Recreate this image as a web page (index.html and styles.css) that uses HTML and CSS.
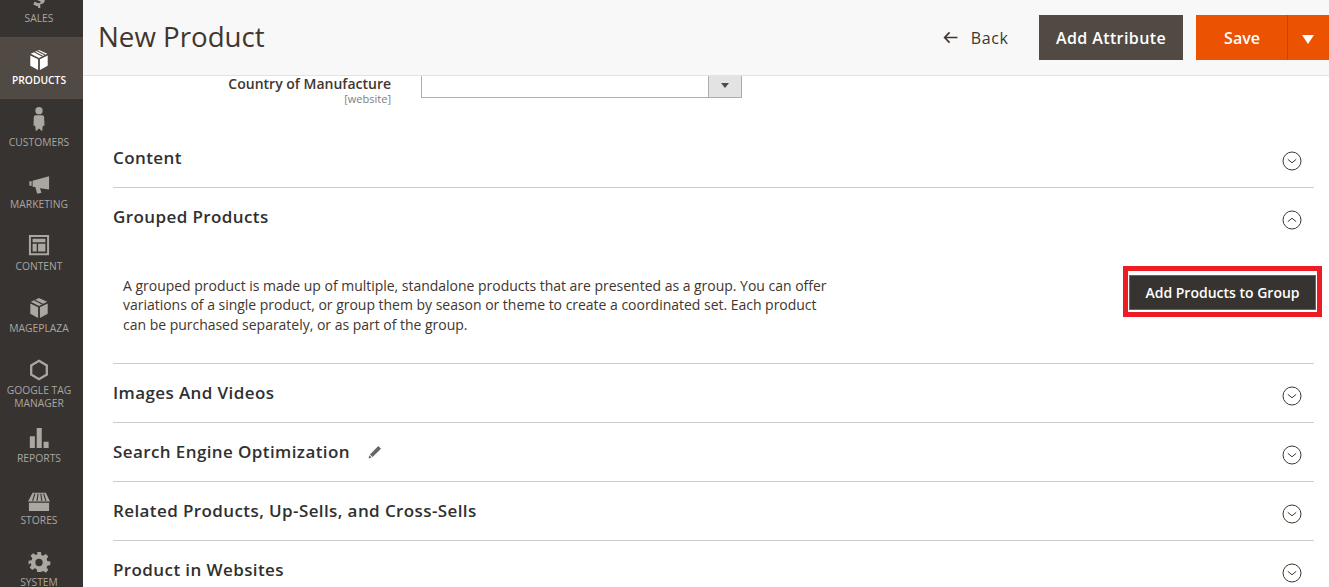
FILE: index.html
```html
<!DOCTYPE html>
<html lang="en">
<head>
<meta charset="utf-8">
<title>New Product</title>
<link rel="stylesheet" href="styles.css">
</head>
<body>
<div class="app">
  <nav class="sidebar">
    <a class="nav-item"><svg class="nav-icon" viewBox="0 -3 24 24"><path d="M11 -2h2.400v2.200c2 .2 3.500.8 4.800 1.800l-1.700 3c-1.200-.9-2.800-1.600-4.200-1.600-1.200 0-1.800.4-1.800 1 0 .8 1 1.100 2.700 1.700 3.200 1 5.200 2.300 5.200 5.100 0 2.500-1.900 4.300-5 4.700V20H11v-2.100c-2.200-.2-4-1-5.300-2.200l1.800-2.900c1.300 1.100 3 1.900 4.400 1.900 1.300 0 2-.4 2-1.200s-1-1.200-2.700-1.800c-3.100-1-5-2.200-5-4.900C6.200 4.400 8 2.500 11 .1z"/></svg><span>SALES</span></a>
    <a class="nav-item active"><svg class="nav-icon" viewBox="0 0 24 24"><path d="M12 1 21 5.200 12 9.800 3 5.200zM2.500 7 11 11.300V23L2.500 18.400zM21.500 7V18.400L13 23V11.300z"/><path class="cut" d="M7 3.200 16 7.800M9.800 2 18.800 6.600"/></svg><span>PRODUCTS</span></a>
    <a class="nav-item"><svg class="nav-icon" viewBox="0 0 24 24"><circle cx="12" cy="-.4" r="4"/><path d="M8.500 4.500h7c1 0 2 .8 2.100 1.800L18 16h-1.800l-.8 6.200-3.400-3.200-3.400 3.200-.8-6.200H6l.4-9.700c.1-1 1.100-1.800 2.100-1.800z"/></svg><span>CUSTOMERS</span></a>
    <a class="nav-item"><svg class="nav-icon" viewBox="0 0 24 24"><path d="M1.500 9H4v5H1.500zM5 8.500 23 3.500V18L13 16.500 14.800 21.500 10 22.500 8 15.300 5 15z"/></svg><span>MARKETING</span></a>
    <a class="nav-item"><svg class="nav-icon" viewBox="0 1 24 24"><path fill-rule="evenodd" d="M1 1h22v22H1zM3.200 3.200v17.600h17.600V3.200zM5 5h14v4H5zM5 10.500h4.500V19H5zM11 10.500h8V19h-8z"/></svg><span>CONTENT</span></a>
    <a class="nav-item"><svg class="nav-icon" viewBox="0 0 24 24"><path d="M12 1 21 5.200 12 9.800 3 5.200zM2.500 7 11 11.300V23L2.500 18.400zM21.500 7V18.400L13 23V11.300z"/><path class="cut" d="M7 3.200 16 7.800"/></svg><span>MAGEPLAZA</span></a>
    <a class="nav-item nav-item-tall"><svg class="nav-icon" viewBox="0 0 24 24"><path class="hex" d="M12 2 20.500 7v10L12 22 3.500 17V7z"/></svg><span>GOOGLE TAG<br>MANAGER</span></a>
    <a class="nav-item"><svg class="nav-icon" viewBox="0 0 24 24"><path d="M2 10h5.500v13H2zM9.500 1H15v22H9.500zM17 16h5.500v7H17z"/></svg><span>REPORTS</span></a>
    <a class="nav-item"><svg class="nav-icon" viewBox="0 -2 24 24"><path d="M5 2h14.500l4.500 9.500H0zM1 13h22v9H1z"/><path class="cut" d="M7.500 3 5 11M11 3 9.800 11M14 3 15 11M17 3 19.500 11"/></svg><span>STORES</span></a>
    <a class="nav-item"><svg class="nav-icon" viewBox="0 0 24 24"><path fill-rule="evenodd" d="M10 1h4l.6 3.300 2 .8L19.400 3.200l2.800 2.800-1.900 2.800.8 2 3.300.6v4l-3.300.6-.8 2 1.900 2.800-2.800 2.800-2.800-1.900-2 .8L14 23h-4l-.6-3.300-2-.8-2.800 1.900-2.800-2.800 1.900-2.800-.8-2L.6 14.600v-4l3.300-.6.800-2-1.900-2.800 2.800-2.800 2.800 1.900 2-.8zM12 8.500a4 4 0 1 0 0 8 4 4 0 0 0 0-8z"/></svg><span>SYSTEM</span></a>
  </nav>
  <main class="main">
    <header class="page-header">
      <h1 class="title">New Product</h1>
      <div class="actions">
        <a class="back"><svg class="back-arrow" viewBox="0 0 16 14"><path d="M7 1.500 1.700 7 7 12.500M2 7h13.500"/></svg><span>Back</span></a>
        <button class="btn btn-secondary">Add Attribute</button>
        <div class="split">
          <button class="btn btn-save">Save</button>
          <button class="btn btn-caret" aria-label="More"><span class="caret"></span></button>
        </div>
      </div>
    </header>
    <div class="content">
      <div class="field">
        <div class="field-label"><label>Country of Manufacture</label><small>[website]</small></div>
        <div class="select"><span class="select-arrow"></span></div>
      </div>
      <section class="section">
        <h2>Content</h2>
        <svg class="chev" viewBox="0 0 20 20"><circle cx="10" cy="10" r="9"/><path d="M5.800 8.300 10 11.800 14.200 8.300"/></svg>
      </section>
      <section class="section section-open">
        <div class="section-head">
          <h2>Grouped Products</h2>
          <svg class="chev" viewBox="0 0 20 20"><circle cx="10" cy="10" r="9"/><path d="M5.800 11.700 10 8.200 14.200 11.700"/></svg>
        </div>
        <div class="section-body">
          <p class="desc">A grouped product is made up of multiple, standalone products that are presented as a group. You can offer variations of a single product, or group them by season or theme to create a coordinated set. Each product can be purchased separately, or as part of the group.</p>
          <div class="highlight"><button class="btn-group">Add Products to Group</button></div>
        </div>
      </section>
      <section class="section">
        <h2>Images And Videos</h2>
        <svg class="chev" viewBox="0 0 20 20"><circle cx="10" cy="10" r="9"/><path d="M5.800 8.300 10 11.800 14.200 8.300"/></svg>
      </section>
      <section class="section">
        <h2>Search Engine Optimization<svg class="pencil" viewBox="0 0 14 14"><path d="M10.300 1 13 3.700 4.600 12.100 1.900 9.400zM1.400 10.300 3.700 12.600.5 13.500z"/></svg></h2>
        <svg class="chev" viewBox="0 0 20 20"><circle cx="10" cy="10" r="9"/><path d="M5.800 8.300 10 11.800 14.200 8.300"/></svg>
      </section>
      <section class="section">
        <h2>Related Products, Up-Sells, and Cross-Sells</h2>
        <svg class="chev" viewBox="0 0 20 20"><circle cx="10" cy="10" r="9"/><path d="M5.800 8.300 10 11.800 14.200 8.300"/></svg>
      </section>
      <section class="section">
        <h2>Product in Websites</h2>
        <svg class="chev" viewBox="0 0 20 20"><circle cx="10" cy="10" r="9"/><path d="M5.800 8.300 10 11.800 14.200 8.300"/></svg>
      </section>
    </div>
  </main>
</div>
</body>
</html>
```

FILE: styles.css
```css
* { box-sizing: border-box; }
html, body { margin: 0; height: 100%; overflow: hidden; background: #fff; }
body { font-family: "Open Sans", "Liberation Sans", sans-serif; color: #303030; }
.app { display: flex; height: 587px; overflow: hidden; }

.sidebar { width: 83px; flex: none; background: #373330; display: flex; flex-direction: column; }
.nav-item { flex: none; height: 62px; display: flex; flex-direction: column; align-items: center; padding: 12px 5px 0 0; color: #aaa6a0; font-size: 10.300px; line-height: 13px; text-align: center; white-space: nowrap; }
.nav-item:first-child { margin-top: -25px; }
.nav-item-tall { height: 68px; }
.nav-item.active { background: #514943; color: #fff; font-weight: 600; }
.nav-icon { width: 22px; height: 22px; fill: #aaa6a0; margin-bottom: 3px; flex: none; overflow: visible; }
.active .nav-icon { fill: #fff; }
.nav-icon .cut { fill: none; stroke: #373330; stroke-width: 1.200; }
.active .nav-icon .cut { stroke: #514943; }
.nav-icon .hex { fill: none; stroke: #aaa6a0; stroke-width: 2.500; }

.main { flex: 1; min-width: 0; display: flex; flex-direction: column; }
.page-header { flex: none; height: 76px; padding: 15px 0 0 15px; background: #f8f8f8; border-bottom: 1px solid #e3e3e3; display: flex; justify-content: space-between; align-items: flex-start; }
.title { margin: 0; font-size: 27.700px; line-height: 43px; font-weight: 400; color: #41362f; }
.actions { display: flex; align-items: center; height: 45px; }
.back { display: flex; align-items: center; gap: 13px; font-size: 16px; letter-spacing: .6px; color: #41362f; margin-right: 30.500px; }
.back-arrow { width: 15px; height: 13px; fill: none; stroke: #41362f; stroke-width: 1.800; }
.btn { border: 0; font-family: inherit; font-weight: 600; color: #fff; height: 45px; font-size: 16px; padding: 0; }
.btn-secondary { width: 144px; background: #514943; letter-spacing: .4px; margin-right: 13px; }
.split { display: flex; }
.btn-save { width: 92px; background: #eb5202; border-right: 1px solid #c84602; padding-left: 1px; }
.btn-caret { width: 41px; background: #eb5202; display: flex; align-items: center; justify-content: center; padding: 4px 1px 0 0; }
.caret { width: 0; height: 0; border-left: 6px solid transparent; border-right: 6px solid transparent; border-top: 9px solid #fff; }

.content { padding: 0 15px 0 30px; }
.field { display: flex; height: 53px; }
.field-label { width: 278px; text-align: right; margin-top: -1px; flex: none; }
.field-label label { display: block; font-size: 14px; font-weight: 600; line-height: 17px; color: #41362f; }
.field-label small { display: block; font-size: 11px; line-height: 14px; color: #808080; }
.select { width: 321px; height: 22px; margin-left: 30px; border: 1px solid #adadad; border-top: 0; position: relative; display: flex; justify-content: flex-end; }
.select-arrow { width: 33px; height: 21px; background: #e3e3e3; border-left: 1px solid #adadad; position: relative; }
.select-arrow::after { content: ""; position: absolute; left: 12px; top: 7px; border-left: 4px solid transparent; border-right: 4px solid transparent; border-top: 5px solid #514943; }

.section { height: 59px; border-bottom: 1px solid #cccccc; display: flex; justify-content: space-between; align-items: flex-start; padding-top: 18px; }
.section:last-child { border-bottom: 0; }
.section h2 { margin: 0; font-size: 17px; line-height: 22px; font-weight: 600; letter-spacing: .4px; color: #303030; display: flex; align-items: center; }
.chev { width: 20px; height: 20px; fill: none; stroke: #41362f; stroke-width: 1; margin: 4px 12.500px 0 0; flex: none; }
.section-open { height: 176px; display: block; padding-top: 18px; }
.section-head { display: flex; justify-content: space-between; align-items: flex-start; }
.section-body { position: relative; padding: 45.500px 0 0 10px; }
.desc { margin: 0; width: 720px; font-size: 14px; line-height: 19.500px; letter-spacing: -.02px; color: #41362f; }
.highlight { position: absolute; left: 1010px; top: 36px; width: 199px; height: 51px; border: 5px solid #ed1c24; padding: 4px 1px 2px; background: #fff; }
.btn-group { display: block; width: 187px; height: 35px; background: #373330; border: 1px solid #1979c3; color: #fff; font-family: inherit; font-size: 14px; font-weight: 600; padding: 0; }
.pencil { width: 14px; height: 14px; margin-left: 18px; fill: #666; }
```
